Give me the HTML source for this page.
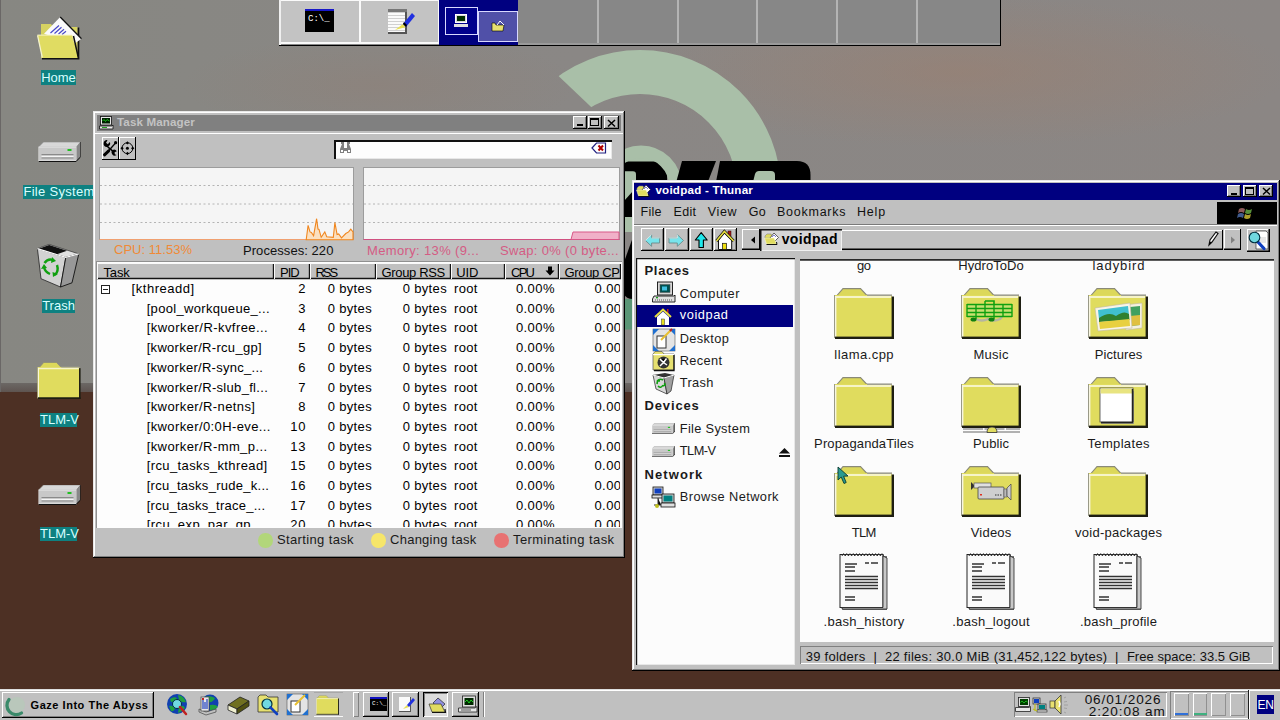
<!DOCTYPE html>
<html><head><meta charset="utf-8">
<style>
*{box-sizing:border-box}
html,body{margin:0;padding:0}
body{width:1280px;height:720px;overflow:hidden;position:relative;font-family:"Liberation Sans",sans-serif;font-size:13px;color:#000;background:#4d3024}
.a{position:absolute}
.t{position:absolute;white-space:nowrap;line-height:1}
svg{position:absolute;overflow:visible}
</style></head>
<body>
<!-- BACKGROUND -->
<div class="a" style="left:0;top:0;width:1280px;height:386px;background:linear-gradient(90deg,#878782 0%,#8a8785 45%,#8b8684 100%)"></div>
<div class="a" style="left:0;top:0;width:1280px;height:386px;background:radial-gradient(ellipse 330px 75px at 960px 72px,rgba(160,125,105,0.45),rgba(160,125,105,0) 100%)"></div>
<div class="a" style="left:0;top:0;width:1280px;height:386px;background:radial-gradient(ellipse 200px 50px at 380px 85px,rgba(150,120,105,0.25),rgba(150,120,105,0) 100%)"></div>
<div class="a" style="left:0;top:383px;width:1280px;height:9px;background:linear-gradient(180deg,#6c6865,#5e5450)"></div>
<div class="a" style="left:0;top:392px;width:1280px;height:328px;background:#4d3024"></div>
<div class="a" style="left:0;top:0;width:1px;height:392px;background:#6a6766"></div>
<svg width="1280" height="720" style="left:0;top:0">
<defs><clipPath id="cut"><polygon points="400,-74.5 900,400.5 1280,400.5 1280,-100 400,-100"/></clipPath></defs>
<circle cx="640" cy="191" r="119" fill="none" stroke="#a9bfa8" stroke-width="44" clip-path="url(#cut)"/>

<path d="M600 161 L661 161 Q667 161 667 167 L667 190 L600 190Z" fill="#000"/>
<path d="M622 153 L662 153 L662 161.5 L622 161.5Z" fill="#a9bfa8"/>
<circle cx="641" cy="186" r="34.3" fill="none" stroke="#a9bfa8" stroke-width="12.6"/>
<path d="M625 171.3 L633 171.3 Q636 171.3 636 174.3 L636 190 L625 190Z" fill="#a9bfa8"/>
<path d="M682 161 L716 161 L704.7 190 L674 190 Z" fill="#000"/>
<path d="M720 161 L797 161 Q810.5 161 810.5 175 L810.5 190 L714.5 190 Z" fill="#000"/>
<path d="M751 190 L755 174 Q756 171 759 171 L771 171 Q775 171 775 175 L775 190Z" fill="#a9bfa8"/>
<path d="M624 183 H633 V217 H624Z" fill="#a9bfa8"/>
<path d="M633 191 L624 201 L624 217 L633 217Z" fill="#000"/>
<path d="M624 217 H633 V237 H624Z" fill="#a9bfa8"/>
<path d="M624 232 H633 V237 H624Z" fill="#8a8785"/>
<path d="M633 237 L624 262 L624 294 Q626 299 633 299 Z" fill="#000"/>
<path d="M624 299 H633 V329.5 H624Z" fill="#5a9676"/>
</svg>

<div id="pager">
<div class="a" style="left:279px;top:0;width:722px;height:46px;background:#000"></div>
<div class="a" style="left:279px;top:0;width:721px;height:45px;background:#878787"></div>
<div class="a" style="left:279px;top:0;width:2px;height:45px;background:#f0f0f0"></div>
<div class="a" style="left:281px;top:0;width:79px;height:44px;background:#c3c3c3;border:1px solid #fafafa;border-left:0;border-top-width:1px;border-bottom-width:2px"></div>
<div class="a" style="left:360px;top:0;width:79px;height:44px;background:#c3c3c3;border:1px solid #fafafa;border-bottom-width:2px"></div>
<div class="a" style="left:439px;top:0;width:79px;height:45px;background:#000080"></div>
<div class="a" style="left:445px;top:7px;width:33px;height:28px;background:#00008c;border:1px solid #d8d8ff"></div>
<div class="a" style="left:478px;top:11px;width:40px;height:31px;background:#5050a8;border:1px solid #d8d8ff"></div>
<div class="a" style="left:597px;top:0;width:2px;height:45px;background:#b4b4b4"></div>
<div class="a" style="left:677px;top:0;width:2px;height:45px;background:#b4b4b4"></div>
<div class="a" style="left:756px;top:0;width:2px;height:45px;background:#b4b4b4"></div>
<div class="a" style="left:836px;top:0;width:2px;height:45px;background:#b4b4b4"></div>
<div class="a" style="left:916px;top:0;width:2px;height:45px;background:#b4b4b4"></div>
<div class="a" style="left:518px;top:43px;width:482px;height:2px;background:#9a9a9a"></div>
<!-- terminal icon -->
<div class="a" style="left:305px;top:9px;width:29px;height:23px;background:#000;border-top:2px solid #1818c8"></div>
<div class="t" style="left:308px;top:15px;font-size:9px;color:#fff;font-family:'Liberation Mono',monospace">C:\_</div>
<!-- notepad icon -->
<div class="a" style="left:388px;top:10px;width:19px;height:24px;background:#fafafa;border-right:2px solid #555;border-bottom:2px solid #555;background-image:repeating-linear-gradient(180deg,#fafafa 0 2px,#d0d0d0 2px 3px)"></div>
<div class="a" style="left:388px;top:9px;width:19px;height:3px;background:#777"></div>
<svg width="30" height="30" style="left:393px;top:10px"><path d="M2 20 L10 14 L13 17 Z" fill="#e8e050"/><path d="M10 14 L19 3 L22 6 L13 17 Z" fill="#2030e0"/><path d="M10 14 L13 17 L14 15 L11 12Z" fill="#000"/></svg>
<!-- mini taskman icon -->
<div class="a" style="left:455px;top:14px;width:12px;height:9px;background:#d8d8d8;border:1px solid #fff"></div>
<div class="a" style="left:457px;top:16px;width:8px;height:5px;background:#003000"></div>
<div class="a" style="left:454px;top:24px;width:14px;height:3px;background:#e0e0e0"></div>
<!-- mini folder icon -->
<svg width="14" height="12" style="left:491px;top:20px"><path d="M1 4 L1 11 L12 11 L13 5 L5 5 L4 3 L1 3 Z" fill="#e8e070" stroke="#000" stroke-width="0.6"/><path d="M6 5 L9 1 L13 5" fill="none" stroke="#fff" stroke-width="1"/></svg>
</div>
<svg width="0" height="0" style="left:0;top:0">
<defs>
<symbol id="fold">
<path d="M2.5 8 L9 0.6 L26.5 0.6 L33.5 8 Z" fill="#dcd85a" stroke="#8a8a78" stroke-width="1.1"/>
<rect x="0" y="7" width="58" height="43" fill="#e0dc5e"/>
<rect x="33" y="6.4" width="25" height="1.6" fill="#a0a090"/>
<rect x="1.2" y="8" width="56" height="2" fill="#f6f4c8"/>
<rect x="0" y="7" width="1" height="43" fill="#9a9a88"/>
<rect x="1" y="8" width="1.4" height="42" fill="#f8f6e0"/>
<rect x="57.6" y="8.5" width="2.4" height="42.5" fill="#1e1e12"/>
<rect x="1" y="48.6" width="59" height="2.4" fill="#1e1e12"/>
</symbol>
<symbol id="doc">
<rect x="3" y="5" width="45" height="54" fill="#777"/>
<rect x="1" y="3.5" width="43" height="53" fill="#fafafa" stroke="#222" stroke-width="1"/>
<path d="M44 5 L48 7 L48 58 L4 58 L2 56.5 L44 56.5Z" fill="#c8c8c8" stroke="#222" stroke-width="0.8"/>
<path d="M3 5 q1.6 -4.5 3.2 0 q1.6 -4.5 3.2 0 q1.6 -4.5 3.2 0 q1.6 -4.5 3.2 0 q1.6 -4.5 3.2 0 q1.6 -4.5 3.2 0 q1.6 -4.5 3.2 0 q1.6 -4.5 3.2 0 q1.6 -4.5 3.2 0 q1.6 -4.5 3.2 0 q1.6 -4.5 3.2 0 q1.6 -4.5 3.2 0 q1.6 -4.5 3.2 0" fill="none" stroke="#333" stroke-width="1"/>
<path d="M6 13 H18 M6 16 H16 M6 20 H16 M26 12 H30 M32 12 H39 M6 25.5 H39 M6 28.5 H39 M6 31.5 H39 M6 34.5 H39 M6 37.5 H39 M6 46 H16 M6 49 H16" stroke="#333" stroke-width="1.7"/>
</symbol>
<symbol id="drive">
<path d="M0 5 L5 0 L42 0 L38 5 Z" fill="#d8d8d8" stroke="#888" stroke-width="0.6"/>
<rect x="0" y="5" width="38" height="14" fill="#c8c8c8" stroke="#f0f0f0" stroke-width="0.8"/>
<path d="M38 5 L42 0 L42 15 L38 19 Z" fill="#888"/>
<path d="M42 0 L42 15 L38 19" fill="none" stroke="#000" stroke-width="1"/>
<rect x="0" y="19" width="38" height="1" fill="#111"/>
<rect x="3" y="12" width="32" height="1" fill="#8a8a8a"/>
<rect x="3" y="14" width="32" height="1" fill="#f4f4f4"/>
<rect x="3" y="15.5" width="32" height="1" fill="#8a8a8a"/>
<rect x="29" y="7" width="4" height="2" fill="#20c020"/>
</symbol>
</defs></svg>
<div id="desk">
<!-- Home -->
<svg width="56" height="52" style="left:32px;top:12px">
<path d="M9 12 L19 12 L21 15 L45.5 15 L45.5 46 L9 46 Z" fill="#d6d262"/>
<path d="M46.5 15.5 L46.5 46.5" stroke="#111" stroke-width="1.6"/>
<path d="M12 21.7 L28.2 5 L49.5 26.7 L42 32 Z" fill="#fafafa"/>
<path d="M28.2 5 L49.5 26.7" stroke="#111" stroke-width="1.3"/>
<path d="M18.5 21 L27 13.5 M22.5 21.5 L29.5 15.3 M26.5 22 L32 17.2 M30 22.5 L34 19.3" stroke="#4848c8" stroke-width="1.2"/>
<path d="M5.4 23.1 L40.1 23.1 L45.9 45.9 L10.1 45.9 Z" fill="#e0dc62"/>
<path d="M5.4 23.1 L40.1 23.1" stroke="#f6f4c8" stroke-width="1"/>
<path d="M5.6 23.5 L10.3 45.5" stroke="#f4f2d0" stroke-width="1.2"/>
<path d="M10 46.8 L46.6 46.8 L41.5 24" fill="none" stroke="#111" stroke-width="1.5"/>
</svg>
<div class="t" style="left:41px;top:69.5px;width:35px;height:15px;background:#0e8181;color:#d8ffff;font-size:13px;line-height:15px;text-align:center">Home</div>
<!-- File System -->
<svg viewBox="0 0 42 20" width="43" height="20" style="left:37.5px;top:142px"><use href="#drive"/></svg>
<div class="t" style="left:23px;top:184.5px;width:72px;height:14px;background:#0e8181;color:#d8ffff;font-size:13px;line-height:14px;text-align:center;letter-spacing:0.3px">File System</div>
<!-- Trash -->
<svg width="56" height="54" style="left:30px;top:240px">
<path d="M7.4 8.6 L19.2 4.4 L48.8 13.9 L35.8 17.4 Z" fill="#e0e0e0" stroke="#222" stroke-width="0.6"/>
<path d="M8.6 8.8 L19.2 5 L37 10.8 L27 14.2 Z" fill="#111"/>
<path d="M7.4 8.6 L35.8 17.4 L30.5 47 L11 38.7 Z" fill="#d2d2d2" stroke="#222" stroke-width="0.8"/>
<path d="M35.8 17.4 L48.8 13.9 L42 42.8 L30.5 47 Z" fill="#989898" stroke="#111" stroke-width="0.9"/>
<path d="M7.4 8.6 L35.8 17.4 L48.8 13.9" fill="none" stroke="#f8f8f8" stroke-width="1.1"/>
<path d="M14.5 23 Q18 18 23 20" fill="none" stroke="#10a010" stroke-width="2.4"/>
<path d="M22 17 L26 21 L21 23Z" fill="#10a010"/>
<path d="M27 25 Q29 31 25 35" fill="none" stroke="#10a010" stroke-width="2.4"/>
<path d="M28 34 L23 37 L22.5 32Z" fill="#10a010"/>
<path d="M20 34 Q15 32 14 27" fill="none" stroke="#10a010" stroke-width="2.4"/>
<path d="M11 29 L14 24 L17 28Z" fill="#10a010"/>
</svg>
<div class="t" style="left:42px;top:298.5px;width:33px;height:14px;background:#0e8181;color:#d8ffff;font-size:13px;line-height:14px;text-align:center">Trash</div>
<!-- TLM-V folder -->
<svg viewBox="0 0 60 51" width="44" height="37" style="left:37px;top:362px"><use href="#fold"/></svg>
<div class="t" style="left:40px;top:413px;width:37px;height:14px;background:#0e8181;color:#d8ffff;font-size:13px;line-height:14px;text-align:center">TLM-V</div>
<!-- TLM-V drive -->
<svg viewBox="0 0 42 20" width="43" height="20" style="left:37.5px;top:485px"><use href="#drive"/></svg>
<div class="t" style="left:40px;top:527.2px;width:37px;height:14px;background:#0e8181;color:#d8ffff;font-size:13px;line-height:14px;text-align:center">TLM-V</div>
</div>
<div id="tm">
<div class="a" style="left:93px;top:111px;width:532px;height:447px;background:#c0c0c0;box-shadow:inset -1px -1px #000,inset 1px 1px #e8e8e8,inset -2px -2px #808080,inset 2px 2px #fff"></div>
<!-- title -->
<div class="a" style="left:97px;top:115px;width:524px;height:16px;background:#808080"></div>
<svg width="16" height="15" style="left:99px;top:115.5px">
<rect x="1.5" y="0.5" width="11" height="8.5" fill="#e8e8e8" stroke="#111" stroke-width="0.8"/>
<rect x="3" y="2" width="8" height="5.5" fill="#002000"/>
<path d="M3.5 5 L5 3.5 L6.5 5.5 L8 3.5 L10.5 5" stroke="#20e020" stroke-width="0.8" fill="none"/>
<path d="M0.5 10 L13 10 L14 9 L14 13 L0.5 13 Z" fill="#e8e8e8" stroke="#111" stroke-width="0.8"/>
<rect x="3" y="11" width="5" height="1" fill="#20a020"/>
</svg>
<div class="t" style="left:117px;top:116.3px;font-size:11.6px;font-weight:bold;color:#c3c3c3;letter-spacing:0.12px">Task Manager</div>
<div class="a" style="left:572.5px;top:116px;width:14px;height:13px;background:#c0c0c0;box-shadow:inset -1px -1px #000,inset 1px 1px #fff,inset -2px -2px #808080"></div>
<div class="a" style="left:577px;top:124px;width:6px;height:2px;background:#000"></div>
<div class="a" style="left:587.5px;top:116px;width:14px;height:13px;background:#c0c0c0;box-shadow:inset -1px -1px #000,inset 1px 1px #fff,inset -2px -2px #808080"></div>
<div class="a" style="left:590px;top:118px;width:9px;height:8px;border:1px solid #000;border-top-width:2px"></div>
<div class="a" style="left:604px;top:116px;width:14.5px;height:13px;background:#c0c0c0;box-shadow:inset -1px -1px #000,inset 1px 1px #fff,inset -2px -2px #808080"></div>
<svg width="10" height="9" style="left:607px;top:118.5px"><path d="M1 1 L8 7.5 M8 1 L1 7.5" stroke="#000" stroke-width="1.5"/></svg>
<div class="a" style="left:95px;top:133px;width:528px;height:1px;background:#fff"></div>
<!-- toolbar -->
<div class="a" style="left:102px;top:137px;width:17px;height:23px;background:#c0c0c0;box-shadow:inset -1px -1px #000,inset 1px 1px #fff"></div>
<div class="a" style="left:118.5px;top:137px;width:17.5px;height:23px;background:#c0c0c0;box-shadow:inset -1px -1px #000,inset 1px 1px #fff"></div>
<svg width="40" height="28" style="left:100px;top:135px">
<path d="M4.5 19.8 L8.7 15.8" stroke="#000" stroke-width="3" stroke-linecap="round"/>
<path d="M8 16.5 L15.5 8" stroke="#000" stroke-width="1.2"/>
<circle cx="15.6" cy="7.7" r="1.6" fill="#000"/>
<path d="M3.6 8.3 A3.2 3.2 0 0 1 7.5 5.2 L6 7.8 L7.8 9.2 L9.8 7 A3.2 3.2 0 0 1 8.3 11.2 L10.5 13.2 L9.5 14.4 L7 12 A3.2 3.2 0 0 1 3.6 8.3 Z" fill="#000"/>
<path d="M10.5 13 L12.6 15 A3.2 3.2 0 0 1 16.8 16.3 L14.6 17.2 L14.8 19.3 L16.6 20 A3.2 3.2 0 0 1 12.2 19.2 A3.2 3.2 0 0 1 11.6 16.3 L9.6 14.2Z" fill="#000"/>
<circle cx="27.4" cy="13.2" r="5.4" fill="none" stroke="#000" stroke-width="1"/>
<circle cx="27.4" cy="13.2" r="1.5" fill="#000"/>
<path d="M27.4 6.2 L28.9 7.9 L27.4 9.6 L25.9 7.9Z M27.4 16.8 L28.9 18.5 L27.4 20.2 L25.9 18.5Z M20.4 13.2 L22.1 11.7 L23.8 13.2 L22.1 14.7Z M31 13.2 L32.7 11.7 L34.4 13.2 L32.7 14.7Z" fill="#000"/>
</svg>
<!-- search -->
<div class="a" style="left:334px;top:139.5px;width:278px;height:19.5px;background:#fdfdfd;box-shadow:inset 2px 2px #111,inset -1px -1px #e8e8e8"></div>
<svg width="16" height="14" style="left:338px;top:141px">
<path d="M2 12 L2 8 L4 3 L6 3 L6 12 Z M9 12 L9 3 L11 3 L13 8 L13 12 Z M6 7 L9 7 L9 10 L6 10Z" fill="#808080"/>
<rect x="3" y="1" width="3" height="2" fill="#808080"/><rect x="9" y="1" width="3" height="2" fill="#808080"/>
<rect x="3" y="9" width="2" height="2" fill="#fff"/><rect x="10" y="9" width="2" height="2" fill="#fff"/>
</svg>
<svg width="16" height="13" style="left:591px;top:142px">
<path d="M1 6 L5.5 1 L14.5 1 L14.5 11 L5.5 11 Z" fill="#fff" stroke="#202080" stroke-width="1.2"/>
<path d="M7.5 3.5 L12 8.5 M12 3.5 L7.5 8.5" stroke="#b00000" stroke-width="2"/>
</svg>
<!-- graphs -->
<div class="a" style="left:99px;top:167px;width:255px;height:73px;background:#f5f5f5;border:1px solid #9c9c9c;border-bottom-color:#f0a070"></div>
<div class="a" style="left:363px;top:167px;width:256.5px;height:73px;background:#f5f5f5;border:1px solid #9c9c9c;border-bottom-color:#d05080"></div>
<svg width="1280" height="300" style="left:0;top:0">
<path d="M100 185.5 H353 M100 204 H353 M100 222.5 H353 M364 185.5 H619 M364 204 H619 M364 222.5 H619" stroke="#b4b4b4" stroke-width="1" stroke-dasharray="2 2.5"/>
<path d="M306.2 239.8 L308.1 225.3 L310 231.9 L311.4 232.4 L313.6 235.7 L316.6 218.7 L318 229.1 L319 229.4 L321.2 237.3 L324.8 231.9 L326.7 236.8 L333.3 237.3 L334.9 222.6 L337.1 234.6 L338.7 234 L341.5 237.9 L345.8 233.5 L348.6 231.9 L350.8 229.1 L353 231.9 L353 239.8 Z" fill="#fbe0c0" stroke="#f0861e" stroke-width="1.1"/>
<path d="M571 239.5 L573 232 L619 232 L619 239.5 Z" fill="#f0b0c8" stroke="#d85888" stroke-width="1"/>
</svg>
<div class="t" style="left:114px;top:243.3px;font-size:13px;color:#f08a36;letter-spacing:0.02px">CPU: 11.53%</div>
<div class="t" style="left:243px;top:243.8px;font-size:13px;color:#111;letter-spacing:0.06px">Processes: 220</div>
<div class="t" style="left:367px;top:243.8px;font-size:13px;color:#d45c84;letter-spacing:0.35px">Memory: 13% (9...</div>
<div class="t" style="left:500px;top:243.8px;font-size:13px;color:#d45c84;letter-spacing:0.33px">Swap: 0% (0 byte...</div>
<!-- list -->
<div class="a" style="left:96px;top:261px;width:526px;height:267px;background:#fdfdfd;box-shadow:inset 1px 1px #909090,inset 0 1px #fff"></div>
<div class="a" style="left:97px;top:262.5px;width:524px;height:17px;background:#c0c0c0"></div>
<!--HDR-->
<div class="a" style="left:97px;top:262.5px;width:177.3px;height:16.5px;box-shadow:inset 1px 1px #fafafa,inset -1.2px -1.2px #141414"></div>
<div class="t" style="left:103.5px;top:265.5px;letter-spacing:-0.14px">Task</div>
<div class="a" style="left:274.3px;top:262.5px;width:35.3px;height:16.5px;box-shadow:inset 1px 1px #fafafa,inset -1.2px -1.2px #141414"></div>
<div class="t" style="left:280px;top:265.5px;letter-spacing:-0.99px">PID</div>
<div class="a" style="left:309.6px;top:262.5px;width:66.7px;height:16.5px;box-shadow:inset 1px 1px #fafafa,inset -1.2px -1.2px #141414"></div>
<div class="t" style="left:315.5px;top:265.5px;letter-spacing:-2.07px">RSS</div>
<div class="a" style="left:376.3px;top:262.5px;width:74.7px;height:16.5px;box-shadow:inset 1px 1px #fafafa,inset -1.2px -1.2px #141414"></div>
<div class="t" style="left:381.6px;top:265.5px;letter-spacing:-0.36px">Group RSS</div>
<div class="a" style="left:451px;top:262.5px;width:54.2px;height:16.5px;box-shadow:inset 1px 1px #fafafa,inset -1.2px -1.2px #141414"></div>
<div class="t" style="left:456.3px;top:265.5px;letter-spacing:-0.20px">UID</div>
<div class="a" style="left:505.2px;top:262.5px;width:53.6px;height:16.5px;box-shadow:inset 1px 1px #fafafa,inset -1.2px -1.2px #141414"></div>
<div class="t" style="left:511px;top:265.5px;letter-spacing:-1.73px">CPU</div>
<div class="a" style="left:558.8px;top:262.5px;width:62.2px;height:16.5px;box-shadow:inset 1px 1px #fafafa,inset -1.2px -1.2px #141414"></div>
<div class="a" style="left:564.4px;top:262.5px;width:55.60000000000002px;height:16px;overflow:hidden"><div class="t" style="left:0;top:3px;letter-spacing:-0.31px">Group CPU</div></div>
<svg width="10" height="10" style="left:545px;top:266px"><path d="M3 0.5 H7 V4.5 H9.5 L5 9.5 L0.5 4.5 H3Z" fill="#000"/></svg>
<!--/HDR-->
<div class="a" style="left:258px;top:533px;width:14.5px;height:14.5px;border-radius:50%;background:#b2d67a"></div>
<div class="t" style="left:277px;top:533.4px;color:#1a1a1a;letter-spacing:0.36px">Starting task</div>
<div class="a" style="left:371px;top:533px;width:14.5px;height:14.5px;border-radius:50%;background:#f6e66a"></div>
<div class="t" style="left:390px;top:533.4px;color:#1a1a1a;letter-spacing:0.26px">Changing task</div>
<div class="a" style="left:494px;top:533px;width:14.5px;height:14.5px;border-radius:50%;background:#e87272"></div>
<div class="t" style="left:513px;top:533.4px;color:#1a1a1a;letter-spacing:0.43px">Terminating task</div>
<!--ROWS-->
<div class="a" style="left:97px;top:279px;width:523px;height:248px;overflow:hidden">
<div class="t" style="left:34.6px;top:3.00px;letter-spacing:0.53px">[kthreadd]</div>
<div class="t" style="right:314px;top:3.00px;letter-spacing:0.6px">2</div>
<div class="t" style="right:248px;top:3.00px;letter-spacing:0.35px">0 bytes</div>
<div class="t" style="right:173px;top:3.00px;letter-spacing:0.35px">0 bytes</div>
<div class="t" style="left:357px;top:3.00px;letter-spacing:0.3px">root</div>
<div class="t" style="right:65px;top:3.00px;letter-spacing:0.45px">0.00%</div>
<div class="t" style="left:497.4px;top:3.00px;letter-spacing:0.45px">0.00%</div>
<div class="a" style="left:4px;top:6px;width:9px;height:9px;border:1.2px solid #222;background:#fff"></div>
<div class="a" style="left:6px;top:10px;width:5px;height:1.3px;background:#222"></div>
<div class="t" style="left:49.7px;top:22.70px;letter-spacing:0.32px">[pool_workqueue_...</div>
<div class="t" style="right:314px;top:22.70px;letter-spacing:0.6px">3</div>
<div class="t" style="right:248px;top:22.70px;letter-spacing:0.35px">0 bytes</div>
<div class="t" style="right:173px;top:22.70px;letter-spacing:0.35px">0 bytes</div>
<div class="t" style="left:357px;top:22.70px;letter-spacing:0.3px">root</div>
<div class="t" style="right:65px;top:22.70px;letter-spacing:0.45px">0.00%</div>
<div class="t" style="left:497.4px;top:22.70px;letter-spacing:0.45px">0.00%</div>
<div class="t" style="left:49.7px;top:42.40px;letter-spacing:0.44px">[kworker/R-kvfree...</div>
<div class="t" style="right:314px;top:42.40px;letter-spacing:0.6px">4</div>
<div class="t" style="right:248px;top:42.40px;letter-spacing:0.35px">0 bytes</div>
<div class="t" style="right:173px;top:42.40px;letter-spacing:0.35px">0 bytes</div>
<div class="t" style="left:357px;top:42.40px;letter-spacing:0.3px">root</div>
<div class="t" style="right:65px;top:42.40px;letter-spacing:0.45px">0.00%</div>
<div class="t" style="left:497.4px;top:42.40px;letter-spacing:0.45px">0.00%</div>
<div class="t" style="left:49.7px;top:62.10px;letter-spacing:0.30px">[kworker/R-rcu_gp]</div>
<div class="t" style="right:314px;top:62.10px;letter-spacing:0.6px">5</div>
<div class="t" style="right:248px;top:62.10px;letter-spacing:0.35px">0 bytes</div>
<div class="t" style="right:173px;top:62.10px;letter-spacing:0.35px">0 bytes</div>
<div class="t" style="left:357px;top:62.10px;letter-spacing:0.3px">root</div>
<div class="t" style="right:65px;top:62.10px;letter-spacing:0.45px">0.00%</div>
<div class="t" style="left:497.4px;top:62.10px;letter-spacing:0.45px">0.00%</div>
<div class="t" style="left:49.7px;top:81.80px;letter-spacing:0.28px">[kworker/R-sync_...</div>
<div class="t" style="right:314px;top:81.80px;letter-spacing:0.6px">6</div>
<div class="t" style="right:248px;top:81.80px;letter-spacing:0.35px">0 bytes</div>
<div class="t" style="right:173px;top:81.80px;letter-spacing:0.35px">0 bytes</div>
<div class="t" style="left:357px;top:81.80px;letter-spacing:0.3px">root</div>
<div class="t" style="right:65px;top:81.80px;letter-spacing:0.45px">0.00%</div>
<div class="t" style="left:497.4px;top:81.80px;letter-spacing:0.45px">0.00%</div>
<div class="t" style="left:49.7px;top:101.50px;letter-spacing:0.31px">[kworker/R-slub_fl...</div>
<div class="t" style="right:314px;top:101.50px;letter-spacing:0.6px">7</div>
<div class="t" style="right:248px;top:101.50px;letter-spacing:0.35px">0 bytes</div>
<div class="t" style="right:173px;top:101.50px;letter-spacing:0.35px">0 bytes</div>
<div class="t" style="left:357px;top:101.50px;letter-spacing:0.3px">root</div>
<div class="t" style="right:65px;top:101.50px;letter-spacing:0.45px">0.00%</div>
<div class="t" style="left:497.4px;top:101.50px;letter-spacing:0.45px">0.00%</div>
<div class="t" style="left:49.7px;top:121.20px;letter-spacing:0.40px">[kworker/R-netns]</div>
<div class="t" style="right:314px;top:121.20px;letter-spacing:0.6px">8</div>
<div class="t" style="right:248px;top:121.20px;letter-spacing:0.35px">0 bytes</div>
<div class="t" style="right:173px;top:121.20px;letter-spacing:0.35px">0 bytes</div>
<div class="t" style="left:357px;top:121.20px;letter-spacing:0.3px">root</div>
<div class="t" style="right:65px;top:121.20px;letter-spacing:0.45px">0.00%</div>
<div class="t" style="left:497.4px;top:121.20px;letter-spacing:0.45px">0.00%</div>
<div class="t" style="left:49.7px;top:140.90px;letter-spacing:0.39px">[kworker/0:0H-eve...</div>
<div class="t" style="right:314px;top:140.90px;letter-spacing:0.6px">10</div>
<div class="t" style="right:248px;top:140.90px;letter-spacing:0.35px">0 bytes</div>
<div class="t" style="right:173px;top:140.90px;letter-spacing:0.35px">0 bytes</div>
<div class="t" style="left:357px;top:140.90px;letter-spacing:0.3px">root</div>
<div class="t" style="right:65px;top:140.90px;letter-spacing:0.45px">0.00%</div>
<div class="t" style="left:497.4px;top:140.90px;letter-spacing:0.45px">0.00%</div>
<div class="t" style="left:49.7px;top:160.60px;letter-spacing:0.41px">[kworker/R-mm_p...</div>
<div class="t" style="right:314px;top:160.60px;letter-spacing:0.6px">13</div>
<div class="t" style="right:248px;top:160.60px;letter-spacing:0.35px">0 bytes</div>
<div class="t" style="right:173px;top:160.60px;letter-spacing:0.35px">0 bytes</div>
<div class="t" style="left:357px;top:160.60px;letter-spacing:0.3px">root</div>
<div class="t" style="right:65px;top:160.60px;letter-spacing:0.45px">0.00%</div>
<div class="t" style="left:497.4px;top:160.60px;letter-spacing:0.45px">0.00%</div>
<div class="t" style="left:49.7px;top:180.30px;letter-spacing:0.39px">[rcu_tasks_kthread]</div>
<div class="t" style="right:314px;top:180.30px;letter-spacing:0.6px">15</div>
<div class="t" style="right:248px;top:180.30px;letter-spacing:0.35px">0 bytes</div>
<div class="t" style="right:173px;top:180.30px;letter-spacing:0.35px">0 bytes</div>
<div class="t" style="left:357px;top:180.30px;letter-spacing:0.3px">root</div>
<div class="t" style="right:65px;top:180.30px;letter-spacing:0.45px">0.00%</div>
<div class="t" style="left:497.4px;top:180.30px;letter-spacing:0.45px">0.00%</div>
<div class="t" style="left:49.7px;top:200.00px;letter-spacing:0.27px">[rcu_tasks_rude_k...</div>
<div class="t" style="right:314px;top:200.00px;letter-spacing:0.6px">16</div>
<div class="t" style="right:248px;top:200.00px;letter-spacing:0.35px">0 bytes</div>
<div class="t" style="right:173px;top:200.00px;letter-spacing:0.35px">0 bytes</div>
<div class="t" style="left:357px;top:200.00px;letter-spacing:0.3px">root</div>
<div class="t" style="right:65px;top:200.00px;letter-spacing:0.45px">0.00%</div>
<div class="t" style="left:497.4px;top:200.00px;letter-spacing:0.45px">0.00%</div>
<div class="t" style="left:49.7px;top:219.70px;letter-spacing:0.26px">[rcu_tasks_trace_...</div>
<div class="t" style="right:314px;top:219.70px;letter-spacing:0.6px">17</div>
<div class="t" style="right:248px;top:219.70px;letter-spacing:0.35px">0 bytes</div>
<div class="t" style="right:173px;top:219.70px;letter-spacing:0.35px">0 bytes</div>
<div class="t" style="left:357px;top:219.70px;letter-spacing:0.3px">root</div>
<div class="t" style="right:65px;top:219.70px;letter-spacing:0.45px">0.00%</div>
<div class="t" style="left:497.4px;top:219.70px;letter-spacing:0.45px">0.00%</div>
<div class="t" style="left:49.7px;top:239.40px;letter-spacing:0.45px">[rcu_exp_par_gp...</div>
<div class="t" style="right:314px;top:239.40px;letter-spacing:0.6px">20</div>
<div class="t" style="right:248px;top:239.40px;letter-spacing:0.35px">0 bytes</div>
<div class="t" style="right:173px;top:239.40px;letter-spacing:0.35px">0 bytes</div>
<div class="t" style="left:357px;top:239.40px;letter-spacing:0.3px">root</div>
<div class="t" style="right:65px;top:239.40px;letter-spacing:0.45px">0.00%</div>
<div class="t" style="left:497.4px;top:239.40px;letter-spacing:0.45px">0.00%</div>
</div>
<!--/ROWS-->
</div>
<div id="th">
<div class="a" style="left:631.5px;top:180px;width:648.5px;height:491px;background:#c0c0c0;box-shadow:inset -1px -1px #000,inset 1px 1px #e8e8e8,inset -2px -2px #808080,inset 2px 2px #fff"></div>
<div class="a" style="left:634px;top:182.6px;width:643px;height:17.2px;background:#000080"></div>
<svg width="16" height="14" style="left:636px;top:184px">
<path d="M1 4 L3 2 L7 2 L8 4 L8 6 L1 6Z" fill="#e0dc60" stroke="#777" stroke-width="0.5"/>
<path d="M6 6 L10 1 L14.5 5.5 L11 9Z" fill="#fff" stroke="#222" stroke-width="0.7"/>
<path d="M8 5 L10 3 L12 5" stroke="#6060d0" stroke-width="0.8" fill="none"/>
<path d="M0.5 6 L10 6 L12.5 12 L2.5 12Z" fill="#e0dc60" stroke="#fafad0" stroke-width="0.5"/>
<path d="M2.5 12.5 L13 12.5 L12.5 10" stroke="#111" stroke-width="1" fill="none"/>
</svg>
<div class="t" style="left:655.4px;top:184.4px;font-size:11.6px;font-weight:bold;color:#fff;letter-spacing:0.23px">voidpad - Thunar</div>
<div class="a" style="left:1227px;top:185px;width:14px;height:12px;background:#c0c0c0;box-shadow:inset -1px -1px #000,inset 1px 1px #fff,inset -2px -2px #808080"></div>
<div class="a" style="left:1231px;top:192.5px;width:6px;height:2px;background:#000"></div>
<div class="a" style="left:1242.5px;top:185px;width:14px;height:12px;background:#c0c0c0;box-shadow:inset -1px -1px #000,inset 1px 1px #fff,inset -2px -2px #808080"></div>
<div class="a" style="left:1245px;top:187px;width:9px;height:8px;border:1px solid #000;border-top-width:2px"></div>
<div class="a" style="left:1259px;top:185px;width:14px;height:12px;background:#c0c0c0;box-shadow:inset -1px -1px #000,inset 1px 1px #fff,inset -2px -2px #808080"></div>
<svg width="10" height="9" style="left:1261.5px;top:186.8px"><path d="M1 1 L8 7.5 M8 1 L1 7.5" stroke="#000" stroke-width="1.5"/></svg>
<!-- menubar -->
<div class="t" style="left:640.6px;top:206px;font-size:12.5px;color:#111;letter-spacing:0.25px">File</div>
<div class="t" style="left:673.6px;top:206px;font-size:12.5px;color:#111;letter-spacing:0.28px">Edit</div>
<div class="t" style="left:707.7px;top:206px;font-size:12.5px;color:#111;letter-spacing:0.67px">View</div>
<div class="t" style="left:748.8px;top:206px;font-size:12.5px;color:#111;letter-spacing:0.21px">Go</div>
<div class="t" style="left:777px;top:206px;font-size:12.5px;color:#111;letter-spacing:0.75px">Bookmarks</div>
<div class="t" style="left:857px;top:206px;font-size:12.5px;color:#111;letter-spacing:0.79px">Help</div>
<div class="a" style="left:1217px;top:201.7px;width:60px;height:22.5px;background:#000"></div>
<svg width="16" height="14" style="left:1238px;top:206px">
<path d="M1 3 Q4 1 7 3 L6 7 Q3 5 0 7Z" fill="#b07070" opacity="0.8"/>
<path d="M8 3 Q11 5 14 3 L13 7 Q10 9 7 7Z" fill="#60a040" opacity="0.9"/>
<path d="M0 8 Q3 6 6 8 L5 12 Q2 10 -1 12Z" fill="#5070b0" opacity="0.8"/>
<path d="M7 8 Q10 10 13 8 L12 12 Q9 14 6 12Z" fill="#c0b030" opacity="0.9"/>
</svg>
<div class="a" style="left:634px;top:224.2px;width:643px;height:1px;background:#7a7a7a"></div>
<div class="a" style="left:634px;top:225.2px;width:643px;height:1px;background:#fff"></div>
<!-- toolbar -->
<div class="a" style="left:640.7px;top:228.2px;width:23.5px;height:23px;background:#c0c0c0;box-shadow:inset -1px -1px #000,inset 1px 1px #fff,inset -2px -2px #808080"></div>
<div class="a" style="left:665px;top:228.2px;width:23.5px;height:23px;background:#c0c0c0;box-shadow:inset -1px -1px #000,inset 1px 1px #fff,inset -2px -2px #808080"></div>
<div class="a" style="left:689.5px;top:228.2px;width:23px;height:23px;background:#c0c0c0;box-shadow:inset -1px -1px #000,inset 1px 1px #fff,inset -2px -2px #808080"></div>
<div class="a" style="left:713.5px;top:228.2px;width:23.5px;height:23px;background:#c0c0c0;box-shadow:inset -1px -1px #000,inset 1px 1px #fff,inset -2px -2px #808080"></div>
<svg width="100" height="28" style="left:638px;top:226px">
<path d="M7.4 14.5 L13.6 8.6 L13.6 12 L21.6 12 L21.6 17 L13.6 17 L13.6 20.3 Z" fill="#78e4ec" stroke="#6a8a8a" stroke-width="0.9" stroke-linejoin="round"/>
<path d="M7.4 14.5 L13.6 8.6 M13.6 12 L21.6 12" stroke="#f0ffff" stroke-width="0.8"/>
<path d="M45.5 14.5 L39.3 8.6 L39.3 12 L31 12 L31 17 L39.3 17 L39.3 20.3 Z" fill="#78e4ec" stroke="#6a8a8a" stroke-width="0.9" stroke-linejoin="round"/>
<path d="M31 12 L39.3 12 L39.3 8.6" stroke="#f0ffff" stroke-width="0.8" fill="none"/>
<path d="M63.2 6.7 L69.2 14 L65.4 14 L65.4 21.5 L61 21.5 L61 14 L57.3 14 Z" fill="#20e8ec" stroke="#000" stroke-width="1.1" stroke-linejoin="round"/>
<rect x="90" y="5" width="3" height="6" fill="#a01818" stroke="#300" stroke-width="0.5"/>
<path d="M80.5 14 L80.5 23.5 L93.7 23.5 L93.7 14 L86.4 7 Z" fill="#fff" stroke="#111" stroke-width="1"/>
<path d="M78.5 15 L86.4 5.5 L95.6 15" fill="none" stroke="#111" stroke-width="3"/>
<path d="M78.5 15 L86.4 5.5 L95.6 15" fill="none" stroke="#e8e040" stroke-width="1.6"/>
<rect x="84.6" y="17.3" width="3.9" height="6" fill="#f0e010" stroke="#111" stroke-width="0.7"/>
</svg>
<!-- location bar -->
<div class="a" style="left:742.3px;top:229.2px;width:18px;height:20.6px;background:#c0c0c0;box-shadow:inset -1px -1.5px #000,inset 1px 1px #fff"></div>
<svg width="6" height="8" style="left:749.5px;top:235.5px"><path d="M5 0.5 L5 7.5 L1 4Z" fill="#000"/></svg>
<div class="a" style="left:760.2px;top:229.2px;width:81.5px;height:21.5px;background:#d6d6d6;box-shadow:inset 1.5px 1.5px #111,inset -1px -1px #f0f0f0"></div>
<svg width="16" height="14" style="left:763.5px;top:232px">
<path d="M1 4 L3 2 L7 2 L8 4 L8 6 L1 6Z" fill="#e0dc60" stroke="#777" stroke-width="0.5"/>
<path d="M6 6 L10 1 L14.5 5.5 L11 9Z" fill="#fff" stroke="#222" stroke-width="0.7"/>
<path d="M8 5 L10 3 L12 5" stroke="#6060d0" stroke-width="0.8" fill="none"/>
<path d="M0.5 6 L10 6 L12.5 12 L2.5 12Z" fill="#e0dc60" stroke="#fafad0" stroke-width="0.5"/>
<path d="M2.5 12.5 L13 12.5 L12.5 10" stroke="#111" stroke-width="1" fill="none"/>
</svg>
<div class="t" style="left:781.7px;top:232px;font-size:14px;font-weight:bold;color:#000;letter-spacing:0.37px">voidpad</div>
<div class="a" style="left:841.7px;top:229.6px;width:381px;height:20.4px;background:#c0c0c0;box-shadow:inset -1px -1.5px #000,inset 0 1px #fff"></div>
<svg width="12" height="17" style="left:1207px;top:230px"><path d="M2 15 L3 10 L9 2 L11 3.5 L5 12 Z" fill="#fff" stroke="#111" stroke-width="1.2"/><path d="M2 15 L3 11.5 L4.5 12.8Z" fill="#000"/></svg>
<div class="a" style="left:1223.7px;top:229.2px;width:17.5px;height:20.6px;background:#c0c0c0;box-shadow:inset -1px -1.5px #000,inset 1px 1px #fff"></div>
<svg width="6" height="8" style="left:1229.5px;top:235.5px"><path d="M1 0.5 L1 7.5 L5 4Z" fill="#808080"/></svg>
<div class="a" style="left:1246.7px;top:228.7px;width:23.5px;height:23px;background:#c0c0c0;box-shadow:inset -1.5px -1.5px #000,inset 1px 1px #fff"></div>
<svg width="22" height="22" style="left:1248px;top:230px">
<path d="M8 1 L18 1 L20 3 L20 19 L8 19Z" fill="#fff" stroke="#333" stroke-width="0.7"/>
<path d="M12 8 H18 M12 10 H18 M12 12 H18" stroke="#bbb" stroke-width="0.7"/>
<path d="M9 11 L16 18.5" stroke="#1040c0" stroke-width="3.2" stroke-linecap="round"/>
<circle cx="6.5" cy="7.5" r="5.3" fill="#70d8e0" stroke="#003040" stroke-width="1.1"/>
</svg>
<!-- sidebar -->
<div class="a" style="left:636px;top:257.8px;width:159px;height:407px;background:#fcfcfc;box-shadow:inset 1.2px 1.2px #111,inset -1px -1px #e8e8e8"></div>
<div class="a" style="left:637px;top:305px;width:156px;height:21.8px;background:#000080"></div>
<!--SIDE-->
<div class="t" style="left:644.5px;top:263.5px;font-size:13px;font-weight:bold;letter-spacing:0.68px;color:#1a1a1a">Places</div>
<div class="t" style="left:679.75px;top:287.7px;font-size:12.8px;font-weight:normal;letter-spacing:0.51px;color:#1a1a1a">Computer</div>
<div class="t" style="left:679.75px;top:308.7px;font-size:12.8px;font-weight:normal;letter-spacing:0.56px;color:#fff">voidpad</div>
<div class="t" style="left:679.75px;top:332.7px;font-size:12.8px;font-weight:normal;letter-spacing:0.35px;color:#1a1a1a">Desktop</div>
<div class="t" style="left:679.75px;top:354.6px;font-size:12.8px;font-weight:normal;letter-spacing:0.35px;color:#1a1a1a">Recent</div>
<div class="t" style="left:679.75px;top:377.3px;font-size:12.8px;font-weight:normal;letter-spacing:0.35px;color:#1a1a1a">Trash</div>
<div class="t" style="left:644.5px;top:399.4px;font-size:13px;font-weight:bold;letter-spacing:0.86px;color:#1a1a1a">Devices</div>
<div class="t" style="left:679.75px;top:422.5px;font-size:12.8px;font-weight:normal;letter-spacing:0.32px;color:#1a1a1a">File System</div>
<div class="t" style="left:679.75px;top:444.8px;font-size:12.8px;font-weight:normal;letter-spacing:-0.50px;color:#1a1a1a">TLM-V</div>
<div class="t" style="left:644.5px;top:467.9px;font-size:13px;font-weight:bold;letter-spacing:1.08px;color:#1a1a1a">Network</div>
<div class="t" style="left:679.75px;top:490.8px;font-size:12.8px;font-weight:normal;letter-spacing:0.43px;color:#1a1a1a">Browse Network</div>
<!--SIDEICONS-->
<!--/SIDE-->
<!-- side icons -->
<svg width="24" height="24" style="left:652px;top:281px">
<rect x="5.5" y="1" width="15" height="13" fill="#d8d8d8" stroke="#111" stroke-width="0.9"/>
<rect x="8" y="3.5" width="10" height="8" fill="#005050" stroke="#555" stroke-width="0.5"/>
<rect x="10" y="5.5" width="5" height="4" fill="#40c0e0"/>
<path d="M2 15 L22 15 L23 14 L23 21 L0.5 21 L0.5 18Z" fill="#e0e0e0" stroke="#111" stroke-width="0.9"/>
<path d="M3 19 H21" stroke="#555" stroke-width="1" stroke-dasharray="1 1"/>
<rect x="4" y="16" width="2" height="1.3" fill="#20a020"/>
</svg>
<svg width="20" height="20" style="left:654px;top:306.5px">
<rect x="13" y="2" width="1.5" height="5" fill="#c02020"/>
<path d="M1 10 L9 2.5 L17 10" fill="none" stroke="#e8e040" stroke-width="2"/>
<path d="M3 10 L9 4.5 L15 10 L15 18 L3 18Z" fill="#fff"/>
<rect x="7.5" y="12" width="3" height="6" fill="#e8e020" stroke="#333" stroke-width="0.5"/>
</svg>
<svg width="24" height="24" style="left:652px;top:327.5px">
<rect x="1" y="1" width="22" height="22" fill="#e4e4e4" stroke="#555" stroke-width="0.6"/>
<path d="M1 1 L7 1 L1 7Z M23 1 L17 1 L23 7Z M1 23 L7 23 L1 17Z M23 23 L17 23 L23 17Z" fill="#2070d0"/>
<rect x="5" y="8" width="9" height="12" fill="#fff" stroke="#333" stroke-width="1"/>
<path d="M9 12 L19 2" stroke="#e8c030" stroke-width="2"/>
<path d="M18 3 L20 1" stroke="#c02020" stroke-width="2"/>
</svg>
<svg width="24" height="22" style="left:652px;top:350px">
<path d="M1 4 L3 1.5 L10 1.5 L12 4 L22 4 L22 20 L1 20Z" fill="#e6e070" stroke="#555" stroke-width="0.7"/>
<rect x="1" y="4" width="21" height="1.2" fill="#fff"/>
<path d="M22 5 V20.5 H2" stroke="#111" stroke-width="1.3" fill="none"/>
<circle cx="11.5" cy="12.5" r="6" fill="#333"/>
<path d="M8 9 L11.5 12.5 L14.5 8.5 M11.5 12.5 L8 16 M11.5 12.5 L15 15" stroke="#fff" stroke-width="1.5"/>
</svg>
<svg width="24" height="24" style="left:652px;top:372px">
<path d="M1 3 L12 6 L22 3 L13 1Z" fill="#333"/>
<path d="M1 3 L12 6 L15 22 L4 17Z" fill="#d8d8d8" stroke="#222" stroke-width="0.7"/>
<path d="M12 6 L22 3 L19 19 L15 22Z" fill="#a0a0a0" stroke="#222" stroke-width="0.7"/>
<path d="M1 3 L12 6 L22 3" fill="none" stroke="#fff" stroke-width="1"/>
<path d="M5 9 Q8 6 11 8 M5 12 L5.5 9 L8 9 M11 13 Q9 17 6 14 M11 14 L13 13 L12.5 11" fill="none" stroke="#10a010" stroke-width="1.6"/>
</svg>
<svg viewBox="0 0 42 20" width="23" height="11" style="left:652px;top:423px"><use href="#drive"/></svg>
<svg viewBox="0 0 42 20" width="23" height="11" style="left:652px;top:446px"><use href="#drive"/></svg>
<svg width="14" height="11" style="left:777.5px;top:446.5px"><path d="M1 6.5 L6.5 1 L12 6.5Z" fill="#111"/><rect x="1" y="8" width="11" height="2" fill="#111"/></svg>
<svg width="26" height="24" style="left:651px;top:486px">
<rect x="2" y="1" width="10" height="8" fill="#d0d0d0" stroke="#111" stroke-width="0.8"/>
<rect x="3.5" y="2.5" width="7" height="5" fill="#1040c0"/>
<rect x="1" y="9" width="12" height="3" fill="#e0e0e0" stroke="#111" stroke-width="0.8"/>
<rect x="11" y="8" width="12" height="9" fill="#d0d0d0" stroke="#111" stroke-width="0.8"/>
<rect x="12.5" y="9.5" width="9" height="6" fill="#008080"/>
<rect x="10" y="17" width="14" height="4" fill="#e0e0e0" stroke="#111" stroke-width="0.8"/>
<path d="M7 12 V19 H10 M3 19 H7" stroke="#333" stroke-width="1"/>
<circle cx="6" cy="20" r="2" fill="#c0c020"/>
</svg>

<!-- icon view -->
<div class="a" style="left:799.5px;top:259px;width:474px;height:383px;background:#fcfcfc;box-shadow:inset 0 1.8px #2a2a2a"></div>
<!--ICONS-->
<div class="a" style="left:800.7px;top:260.5px;width:472.5px;height:381px;overflow:hidden">
<div class="t" style="left:56.3px;top:-1.9px;letter-spacing:-0.47px;color:#1a1a1a">go</div>
<div class="t" style="left:157.5px;top:-1.9px;letter-spacing:0.07px;color:#1a1a1a">HydroToDo</div>
<div class="t" style="left:291.9px;top:-1.9px;letter-spacing:0.90px;color:#1a1a1a">ladybird</div>
<div class="t" style="left:33.6px;top:87.4px;letter-spacing:0.46px;color:#1a1a1a">llama.cpp</div>
<div class="t" style="left:172.8px;top:87.4px;letter-spacing:0.26px;color:#1a1a1a">Music</div>
<div class="t" style="left:294.0px;top:87.4px;letter-spacing:0.08px;color:#1a1a1a">Pictures</div>
<div class="t" style="left:13.4px;top:176.6px;letter-spacing:0.13px;color:#1a1a1a">PropagandaTiles</div>
<div class="t" style="left:172.3px;top:176.6px;letter-spacing:0.12px;color:#1a1a1a">Public</div>
<div class="t" style="left:286.8px;top:176.6px;letter-spacing:0.34px;color:#1a1a1a">Templates</div>
<div class="t" style="left:51.0px;top:265.5px;letter-spacing:-0.70px;color:#1a1a1a">TLM</div>
<div class="t" style="left:170.0px;top:265.5px;letter-spacing:0.22px;color:#1a1a1a">Videos</div>
<div class="t" style="left:274.4px;top:265.5px;letter-spacing:0.25px;color:#1a1a1a">void-packages</div>
<div class="t" style="left:22.9px;top:354.1px;letter-spacing:0.28px;color:#1a1a1a">.bash_history</div>
<div class="t" style="left:151.6px;top:354.1px;letter-spacing:0.26px;color:#1a1a1a">.bash_logout</div>
<div class="t" style="left:279.3px;top:354.1px;letter-spacing:0.21px;color:#1a1a1a">.bash_profile</div>
<svg viewBox="0 0 60 51" width="60" height="51" style="left:33.3px;top:27.7px"><use href="#fold"/></svg>
<svg viewBox="0 0 60 51" width="60" height="51" style="left:160.3px;top:27.7px"><use href="#fold"/></svg>
<svg viewBox="0 0 60 51" width="60" height="51" style="left:287.8px;top:27.7px"><use href="#fold"/></svg>
<svg viewBox="0 0 60 51" width="60" height="51" style="left:33.3px;top:116.7px"><use href="#fold"/></svg>
<svg viewBox="0 0 60 51" width="60" height="51" style="left:160.3px;top:116.7px"><use href="#fold"/></svg>
<svg viewBox="0 0 60 51" width="60" height="51" style="left:287.8px;top:116.7px"><use href="#fold"/></svg>
<svg viewBox="0 0 60 51" width="60" height="51" style="left:33.3px;top:205.7px"><use href="#fold"/></svg>
<svg viewBox="0 0 60 51" width="60" height="51" style="left:160.3px;top:205.7px"><use href="#fold"/></svg>
<svg viewBox="0 0 60 51" width="60" height="51" style="left:287.8px;top:205.7px"><use href="#fold"/></svg>
<svg viewBox="0 0 50 60" width="50" height="60" style="left:38.3px;top:290.5px"><use href="#doc"/></svg>
<svg viewBox="0 0 50 60" width="50" height="60" style="left:165.3px;top:290.5px"><use href="#doc"/></svg>
<svg viewBox="0 0 50 60" width="50" height="60" style="left:292.8px;top:290.5px"><use href="#doc"/></svg>
<!--EMB-->
</div>
<!--/ICONS-->
<!-- emblems -->
<svg width="50" height="26" style="left:964px;top:298px">
<path d="M12 21 q6 3 12 0 q6 3 12 0 l6 -8 l0 6" fill="none" stroke="#b0b0a8" stroke-width="2.5" opacity="0.9"/>
<rect x="3" y="6" width="45" height="13" fill="#c8e070"/>
<path d="M3 6.5 H48 M3 10.5 H48 M3 14.5 H48 M3 18.5 H48" stroke="#10a010" stroke-width="1.6"/>
<path d="M3 6 V19 M48 6 V19 M12 6 V21 M30 6 V21 M21 3 V19 M39 6 V19" stroke="#10a010" stroke-width="1.4"/>
<path d="M21 3 H30 V6" fill="none" stroke="#10a010" stroke-width="1.6"/>
<ellipse cx="9.5" cy="21.5" rx="3" ry="2.1" fill="#108010"/>
<ellipse cx="27.5" cy="21.5" rx="3" ry="2.1" fill="#108010"/>
</svg>
<svg width="50" height="30" style="left:1094px;top:301px">
<path d="M30 4 L48 2 L48 27 L32 29Z" fill="#f4f0e0" stroke="#c0b8a0" stroke-width="0.6"/>
<path d="M36 6 L46 5 L46 24 L37 25Z" fill="#40a060"/>
<path d="M36 15 L46 14 L46 24 L37 25Z" fill="#e0c040"/>
<path d="M1 7 L36 2 L38 27 L4 30Z" fill="#f8f4e8" stroke="#c0b8a0" stroke-width="0.6"/>
<path d="M4 9 L34 5 L35 14 L5 18Z" fill="#40c0d0"/>
<path d="M5 17 Q15 10 22 15 Q30 9 35 13 L35.5 19 L5 21Z" fill="#308030"/>
<path d="M5 21 L35.5 18 L36 25 L6 28Z" fill="#e8d040"/>
</svg>
<svg width="60" height="8" style="left:962px;top:426px">
<path d="M1 3 H58" stroke="#999" stroke-width="1.5" stroke-dasharray="20 1.5"/>
<path d="M1 6 H58" stroke="#999" stroke-width="1.5"/>
<path d="M25 6.5 Q25 1 30 1 Q35 1 35 6.5Z" fill="#e0dc60" stroke="#333" stroke-width="0.8"/>
</svg>
<svg width="36" height="38" style="left:1099px;top:387px">
<rect x="2" y="4" width="33" height="33" fill="#9a9a80"/>
<rect x="1" y="1" width="33" height="34" fill="#fff" stroke="#444" stroke-width="0.8"/>
<rect x="1.5" y="1.5" width="32" height="5" fill="#e8e480"/>
<path d="M33.5 2 V35 M2 35.5 H34" stroke="#222" stroke-width="1.5"/>
</svg>
<svg width="42" height="22" style="left:970px;top:480px">
<path d="M1 2 L4 5 L4 7 L1 10Z" fill="#333"/>
<rect x="4" y="3" width="17" height="5" fill="#e0e0e0" stroke="#555" stroke-width="0.7"/>
<rect x="8" y="7" width="26" height="12" rx="1" fill="#cfcfcf" stroke="#444" stroke-width="0.8"/>
<rect x="10" y="14" width="2" height="1.5" fill="#e03020"/>
<path d="M25 15 H32" stroke="#333" stroke-width="1.2" stroke-dasharray="1.5 1"/>
<rect x="34" y="9" width="3" height="8" fill="#bbb" stroke="#555" stroke-width="0.6"/>
<path d="M37 8 L41 4 L41 20 L37 16Z" fill="#ccc" stroke="#444" stroke-width="0.7"/>
</svg>
<svg width="14" height="20" style="left:837px;top:466px">
<path d="M1 1 L1 14 L4.2 11 L7 17.5 L9.2 16.5 L6.6 10.2 L11 10 Z" fill="#2a9a90" stroke="#0a3a30" stroke-width="0.9"/>
</svg>

<!-- status -->
<div class="a" style="left:800px;top:646.2px;width:473px;height:18.2px;box-shadow:inset 1px 1px #808080,inset -1px -1px #fff"></div>
<div class="t" style="left:805.7px;top:650.2px;font-size:13px;color:#111;letter-spacing:0.27px">39 folders</div>
<div class="t" style="left:873.5px;top:650.2px;font-size:13px;color:#111">|</div>
<div class="t" style="left:884.9px;top:650.2px;font-size:13px;color:#111;letter-spacing:0.29px">22 files: 30.0 MiB (31,452,122 bytes)</div>
<div class="t" style="left:1115px;top:650.2px;font-size:13px;color:#111">|</div>
<div class="t" style="left:1126.9px;top:650.2px;font-size:13px;color:#111;letter-spacing:0.04px">Free space: 33.5 GiB</div>
</div>
<div id="tb">
<div class="a" style="left:0;top:688.5px;width:1280px;height:31.5px;background:#c0c0c0;border-top:1px solid #dfdfdf;box-shadow:inset 0 1px #fff"></div>
<!-- start -->
<div class="a" style="left:2px;top:692px;width:152px;height:26px;background:#c0c0c0;box-shadow:inset -1px -1px #000,inset 1px 1px #fff,inset -2px -2px #808080"></div>
<svg width="26" height="24" style="left:3px;top:693px">
<circle cx="14" cy="12" r="8" fill="#a8d8b0" opacity="0.3"/>
<path d="M6 6.5 A9.3 9.3 0 0 0 18.5 20" fill="none" stroke="#3a8a6a" stroke-width="3.3" stroke-linecap="round"/>
</svg>
<div class="t" style="left:30.6px;top:699.5px;font-size:11px;font-weight:bold;color:#000;letter-spacing:0.53px">Gaze Into The Abyss</div>
<!-- quick launch -->
<svg width="24" height="24" style="left:166px;top:693px">
<circle cx="11" cy="11" r="10" fill="#1040b0"/>
<path d="M4 6 Q8 3 11 5 Q9 9 5 9Z M12 2 Q18 3 20 9 Q15 10 13 7Z M3 13 Q7 12 9 16 Q7 19 5 18Z M13 13 Q18 12 19 15 Q16 19 12 20Z" fill="#20a040"/>
<circle cx="11" cy="11" r="4.5" fill="#70d8e0" stroke="#003040" stroke-width="1"/>
<path d="M14 14 L20 21" stroke="#c02020" stroke-width="2.5" stroke-linecap="round"/>
</svg>
<svg width="24" height="24" style="left:196px;top:693px">
<circle cx="14" cy="10" r="8.5" fill="#1040b0"/><path d="M9 4 Q14 2 19 5 Q17 10 12 9Z M14 12 Q20 11 22 14 Q18 18 14 17Z" fill="#20a040"/>
<path d="M3 19 L10 22 L20 19 L20 16 L10 19 L3 16Z" fill="#c0c0c0" stroke="#444" stroke-width="0.7"/>
<rect x="5" y="4" width="8" height="14" fill="#e8e8e8" stroke="#444" stroke-width="0.7"/>
<path d="M7 7 V16 M9 9 V16 M11 6 V16" stroke="#2040c0" stroke-width="1.2"/>
<rect x="6" y="5" width="2" height="2" fill="#c02020"/>
</svg>
<svg width="24" height="24" style="left:226px;top:693px">
<path d="M2 12 L14 4 L23 8 L11 16Z" fill="#707020" stroke="#222" stroke-width="0.8"/>
<path d="M2 12 L11 16 L11 21 L2 17Z" fill="#f0f0d0" stroke="#222" stroke-width="0.8"/>
<path d="M11 16 L23 8 L23 13 L11 21Z" fill="#505010" stroke="#222" stroke-width="0.8"/>
</svg>
<svg width="24" height="24" style="left:257px;top:693px">
<path d="M1 4 L3 2 L9 2 L11 4 L21 4 L21 19 L1 19Z" fill="#e6e070" stroke="#333" stroke-width="0.8"/>
<circle cx="10" cy="11" r="5" fill="#70d8e0" stroke="#003040" stroke-width="1.2"/>
<path d="M13.5 14.5 L20 21" stroke="#1040c0" stroke-width="2.6" stroke-linecap="round"/>
</svg>
<svg width="24" height="24" style="left:286px;top:693px">
<rect x="1" y="1" width="21" height="21" fill="#e4e4e4" stroke="#555" stroke-width="0.6"/>
<path d="M1 1 L7 1 L1 7Z M22 1 L16 1 L22 7Z M1 22 L7 22 L1 16Z M22 22 L16 22 L22 16Z" fill="#2070d0"/>
<rect x="5" y="8" width="9" height="11" fill="#fff" stroke="#333" stroke-width="1"/>
<path d="M9 12 L19 2" stroke="#e8c030" stroke-width="2"/>
</svg>
<div class="a" style="left:313.5px;top:692px;width:29px;height:25px;border-top:1px solid #a8a8a8;border-bottom:1px solid #f8f8f8"></div>
<svg viewBox="0 0 60 51" width="23" height="20" style="left:316px;top:694.5px"><use href="#fold"/></svg>
<!-- separators -->
<div class="a" style="left:353px;top:692px;width:5.5px;height:25px;box-shadow:inset 1px 1px #fff,inset -1px -1px #808080"></div>
<!-- task buttons -->
<div class="a" style="left:362.5px;top:692px;width:26px;height:25px;background:#c0c0c0;box-shadow:inset -1px -1px #000,inset 1px 1px #fff,inset -2px -2px #808080"></div>
<div class="a" style="left:370px;top:697px;width:17px;height:14px;background:#000;border-top:2px solid #1010c0"></div>
<div class="t" style="left:372px;top:701px;font-size:6px;color:#fff;font-family:'Liberation Mono',monospace">C:\_</div>
<div class="a" style="left:392.2px;top:692px;width:26.5px;height:25px;background:#c0c0c0;box-shadow:inset -1px -1px #000,inset 1px 1px #fff,inset -2px -2px #808080"></div>
<div class="a" style="left:399px;top:697px;width:12px;height:15px;background:#fafafa;border-right:1px solid #555;border-bottom:1px solid #555"></div>
<svg width="14" height="14" style="left:402px;top:697px"><path d="M1 12 L5 8 L7 10 Z" fill="#e8e050"/><path d="M5 8 L11 1 L13 3 L7 10 Z" fill="#2030e0"/></svg>
<div class="a" style="left:422.7px;top:692px;width:25.7px;height:25px;background:#dcdcdc;box-shadow:inset 1px 1px #000,inset -1px -1px #fff,inset 2px 2px #808080"></div>
<svg width="20" height="18" style="left:428px;top:697px">
<path d="M5 6 L10 1 L17 7 L12 12Z" fill="#9090e0" stroke="#222" stroke-width="0.7"/>
<path d="M1 7 L13 7 L17 15 L4 15Z" fill="#e0dc60" stroke="#333" stroke-width="0.7"/>
<path d="M4 15.5 L17.5 15.5 L17 12" stroke="#111" stroke-width="1.2" fill="none"/>
</svg>
<div class="a" style="left:452.3px;top:692px;width:26.6px;height:25px;background:#c0c0c0;box-shadow:inset -1px -1px #000,inset 1px 1px #fff,inset -2px -2px #808080"></div>
<svg width="22" height="20" style="left:457px;top:695px">
<rect x="5.5" y="1" width="13" height="11" fill="#e0e0e0" stroke="#222" stroke-width="0.8"/>
<rect x="7.5" y="3" width="9" height="7" fill="#002800"/>
<path d="M8 7 L10 5 L12 8 L14 5 L16 7" stroke="#20e020" stroke-width="0.9" fill="none"/>
<path d="M1.5 13 L18 13 L20 11.5 L20 17 L1.5 17Z" fill="#e8e8e8" stroke="#222" stroke-width="0.8"/>
<rect x="4" y="14.5" width="10" height="1" fill="#555"/>
</svg>
<div class="a" style="left:483px;top:692px;width:2px;height:25px;box-shadow:inset 1px 0 #808080,inset -1px 0 #fff"></div>
<!-- tray -->
<div class="a" style="left:1014.4px;top:692.4px;width:152.5px;height:25px;box-shadow:inset 1px 1px #808080,inset -1px -1px #fff"></div>
<svg width="18" height="16" style="left:1014.5px;top:697px">
<rect x="3.5" y="0.5" width="11" height="9" fill="#e0e0e0" stroke="#222" stroke-width="0.8"/>
<rect x="5" y="2" width="8" height="6" fill="#004000"/>
<path d="M5.5 5.5 L7 4 L9 6 L11 4 L12.5 5" stroke="#20d020" stroke-width="0.8" fill="none"/>
<path d="M0.5 10.5 L14 10.5 L15.5 9.5 L15.5 14.5 L0.5 14.5Z" fill="#e8e8e8" stroke="#222" stroke-width="0.8"/>
</svg>
<svg width="18" height="16" style="left:1031px;top:697px">
<rect x="2" y="1" width="7" height="6" fill="#d0d0d0" stroke="#222" stroke-width="0.7"/>
<rect x="3" y="2" width="5" height="4" fill="#1040c0"/>
<rect x="7" y="7" width="8" height="6" fill="#d0d0d0" stroke="#222" stroke-width="0.7"/>
<rect x="8" y="8" width="6" height="4" fill="#008080"/>
<rect x="6" y="13" width="10" height="2" fill="#e0e0e0" stroke="#222" stroke-width="0.6"/>
<path d="M4 7 V14 M2 12 L6 14" stroke="#c0c020" stroke-width="1.2"/>
</svg>
<svg width="24" height="22" style="left:1049px;top:694px">
<rect x="1" y="7" width="5" height="7" fill="#e8e070" stroke="#333" stroke-width="0.7"/>
<path d="M6 7 L12 1 L12 20 L6 14Z" fill="#e8e070" stroke="#333" stroke-width="0.8"/>
<path d="M10 7 L11 10 L10 13" stroke="#fff" stroke-width="1.5" fill="none"/>
<path d="M15 4 L17 3 M15 8 L18 7.5 M15 11 L19 11 M15 14 L18 14.5 M15 18 L17 19" stroke="#999" stroke-width="0.8"/>
</svg>
<div class="t" style="left:1084.7px;top:693px;font-size:13.6px;color:#111;letter-spacing:0.87px">06/01/2026</div>
<div class="t" style="left:1088.7px;top:704.5px;font-size:13.6px;color:#111;letter-spacing:0.91px">2:20:08 am</div>
<!-- pager boxes -->
<div class="a" style="left:1170px;top:690.5px;width:80px;height:28px;box-shadow:inset 1px 1px #808080,inset -1px -1px #fff"></div>
<div class="a" style="left:1174px;top:692.7px;width:14.6px;height:23px;background:#c0c0c0;box-shadow:inset 1px 1px #fff,inset -1px -1px #909090"></div>
<div class="a" style="left:1175px;top:712.5px;width:13px;height:2px;background:#3070d8"></div>
<div class="a" style="left:1192.6px;top:692.7px;width:14.8px;height:23px;background:#c0c0c0;box-shadow:inset 1px 1px #fff,inset -1px -1px #909090"></div>
<div class="a" style="left:1193.6px;top:712.5px;width:13px;height:2px;background:#40b080"></div>
<div class="a" style="left:1211px;top:692.7px;width:15px;height:23px;background:#c0c0c0;box-shadow:inset 1px 1px #fff,inset -1px -1px #909090"></div>
<div class="a" style="left:1229.8px;top:692.7px;width:14.8px;height:23px;background:#c0c0c0;box-shadow:inset 1px 1px #fff,inset -1px -1px #909090"></div>
<div class="a" style="left:1248px;top:690px;width:2px;height:29px;box-shadow:inset 1px 0 #202020,inset -1px 0 #fff"></div>
<div class="a" style="left:1257px;top:695px;width:16.5px;height:18.5px;background:#000080"></div>
<div class="t" style="left:1257.5px;top:698.5px;font-size:12px;color:#fff;letter-spacing:-0.3px">EN</div>
</div>
</body></html>
